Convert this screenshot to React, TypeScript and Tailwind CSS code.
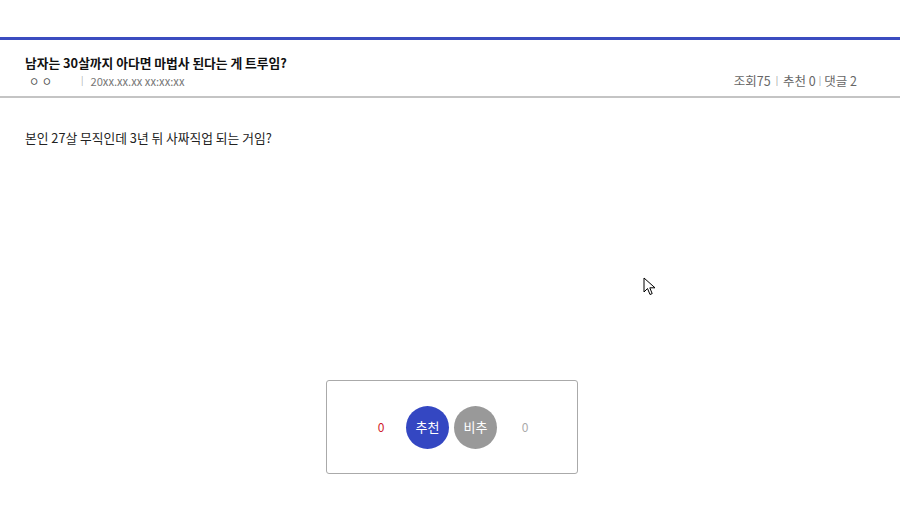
import React from 'react';

const font = { fontFamily: '"Noto Sans CJK KR", "Noto Sans", sans-serif' };

function Cursor() {
  return (
    <svg
      className="absolute left-[643px] top-[277px]"
      width="14"
      height="20"
      viewBox="0 0 14 20"
    >
      <path
        d="M1 1 L1 15 L4.5 11.5 L7 17.5 L9.2 16.6 L6.8 10.8 L12 10.8 Z"
        fill="white"
        stroke="black"
        strokeWidth="1"
        strokeLinejoin="round"
      />
    </svg>
  );
}

export default function App() {
  return (
    <div className="relative w-[900px] h-[506px] bg-white overflow-hidden" style={font}>
      <div className="h-[37px]" />
      <div className="h-[3px] bg-[#3b4cc0]" />
      <div className="flex items-end justify-between px-[25px] pt-[14px] pb-[7px]">
        <div>
          <h1 className="text-[12.75px] font-bold leading-[18px] text-[#111]">
            남자는 30살까지 아다면 마법사 된다는 게 트루임?
          </h1>
          <div className="flex items-center text-[11.2px] leading-[16px] text-[#777] mt-[1px]">
            <span className="pl-[4px] w-[56px] text-[#555]">ㅇ ㅇ</span>
            <span className="text-[#aaa] text-[9px] mr-[7px]">|</span>
            <span>20xx.xx.xx xx:xx:xx</span>
          </div>
        </div>
        <div className="flex items-center text-[12.5px] leading-[16px] text-[#666] mr-[18px]">
          <span>조회75</span>
          <span className="text-[#999] text-[9px] mx-[5px]">|</span>
          <span>추천 0</span>
          <span className="text-[#999] text-[9px] mx-[3px]">|</span>
          <span>댓글 2</span>
        </div>
      </div>
      <div className="h-[2px] bg-[#c4c4c4]" />
      <div className="px-[25px] pt-[31px] text-[12.75px] leading-[18px] text-[#222]">
        본인 27살 무직인데 3년 뒤 사짜직업 되는 거임?
      </div>
      <div className="flex justify-center pt-[233px] pl-[3px]">
        <div className="w-[252px] h-[94px] border border-[#aaa] rounded-[3px] flex items-center justify-center pl-[3px]">
          <span className="text-[12px] text-[#d0202a] w-[20px] text-center mr-[15px]">0</span>
          <button className="w-[43px] h-[43px] rounded-full bg-[#3447c2] text-white text-[13px]">
            추천
          </button>
          <button className="w-[43px] h-[43px] rounded-full bg-[#999] text-white text-[13px] ml-[5px]">
            비추
          </button>
          <span className="text-[12px] text-[#aaa] w-[20px] text-center ml-[18px]">0</span>
        </div>
      </div>
      <Cursor />
    </div>
  );
}
